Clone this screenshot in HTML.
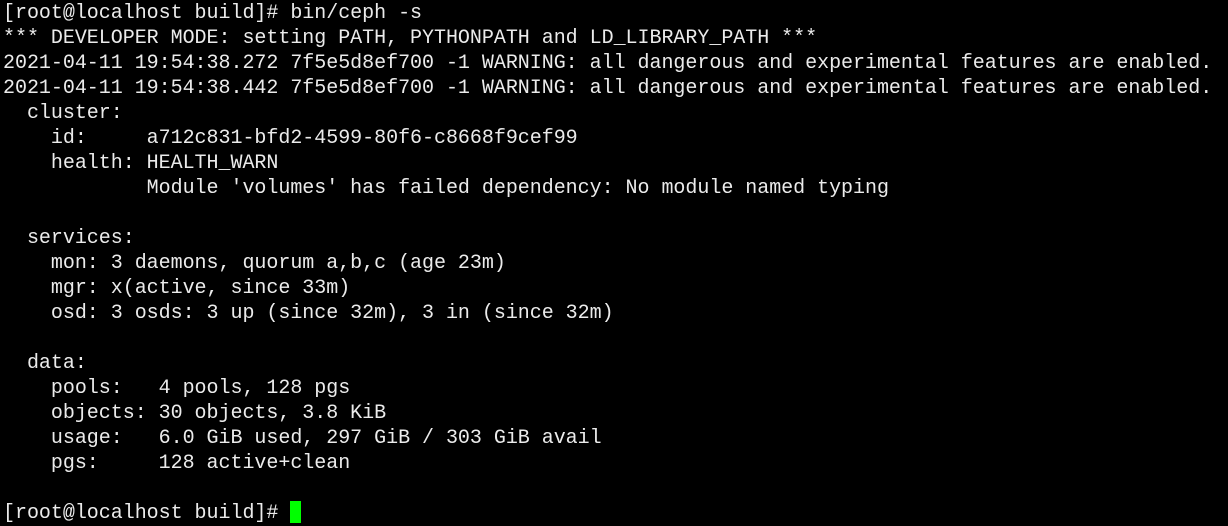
<!DOCTYPE html>
<html><head><style>
html,body{margin:0;padding:0;background:#000;width:1228px;height:526px;overflow:hidden}
pre{margin:0;padding:1px 0 0 3px;font-family:"Liberation Mono","DejaVu Sans Mono",monospace;font-size:20px;line-height:25px;letter-spacing:-0.03px;color:#ebebeb;white-space:pre}
.c{display:inline-block;width:11px;height:22px;background:#00ff00;vertical-align:-5px}
</style></head><body><pre>[root@localhost build]# bin/ceph -s
*** DEVELOPER MODE: setting PATH, PYTHONPATH and LD_LIBRARY_PATH ***
2021-04-11 19:54:38.272 7f5e5d8ef700 -1 WARNING: all dangerous and experimental features are enabled.
2021-04-11 19:54:38.442 7f5e5d8ef700 -1 WARNING: all dangerous and experimental features are enabled.
  cluster:
    id:     a712c831-bfd2-4599-80f6-c8668f9cef99
    health: HEALTH_WARN
            Module 'volumes' has failed dependency: No module named typing

  services:
    mon: 3 daemons, quorum a,b,c (age 23m)
    mgr: x(active, since 33m)
    osd: 3 osds: 3 up (since 32m), 3 in (since 32m)

  data:
    pools:   4 pools, 128 pgs
    objects: 30 objects, 3.8 KiB
    usage:   6.0 GiB used, 297 GiB / 303 GiB avail
    pgs:     128 active+clean

[root@localhost build]# <span class="c"></span></pre></body></html>
